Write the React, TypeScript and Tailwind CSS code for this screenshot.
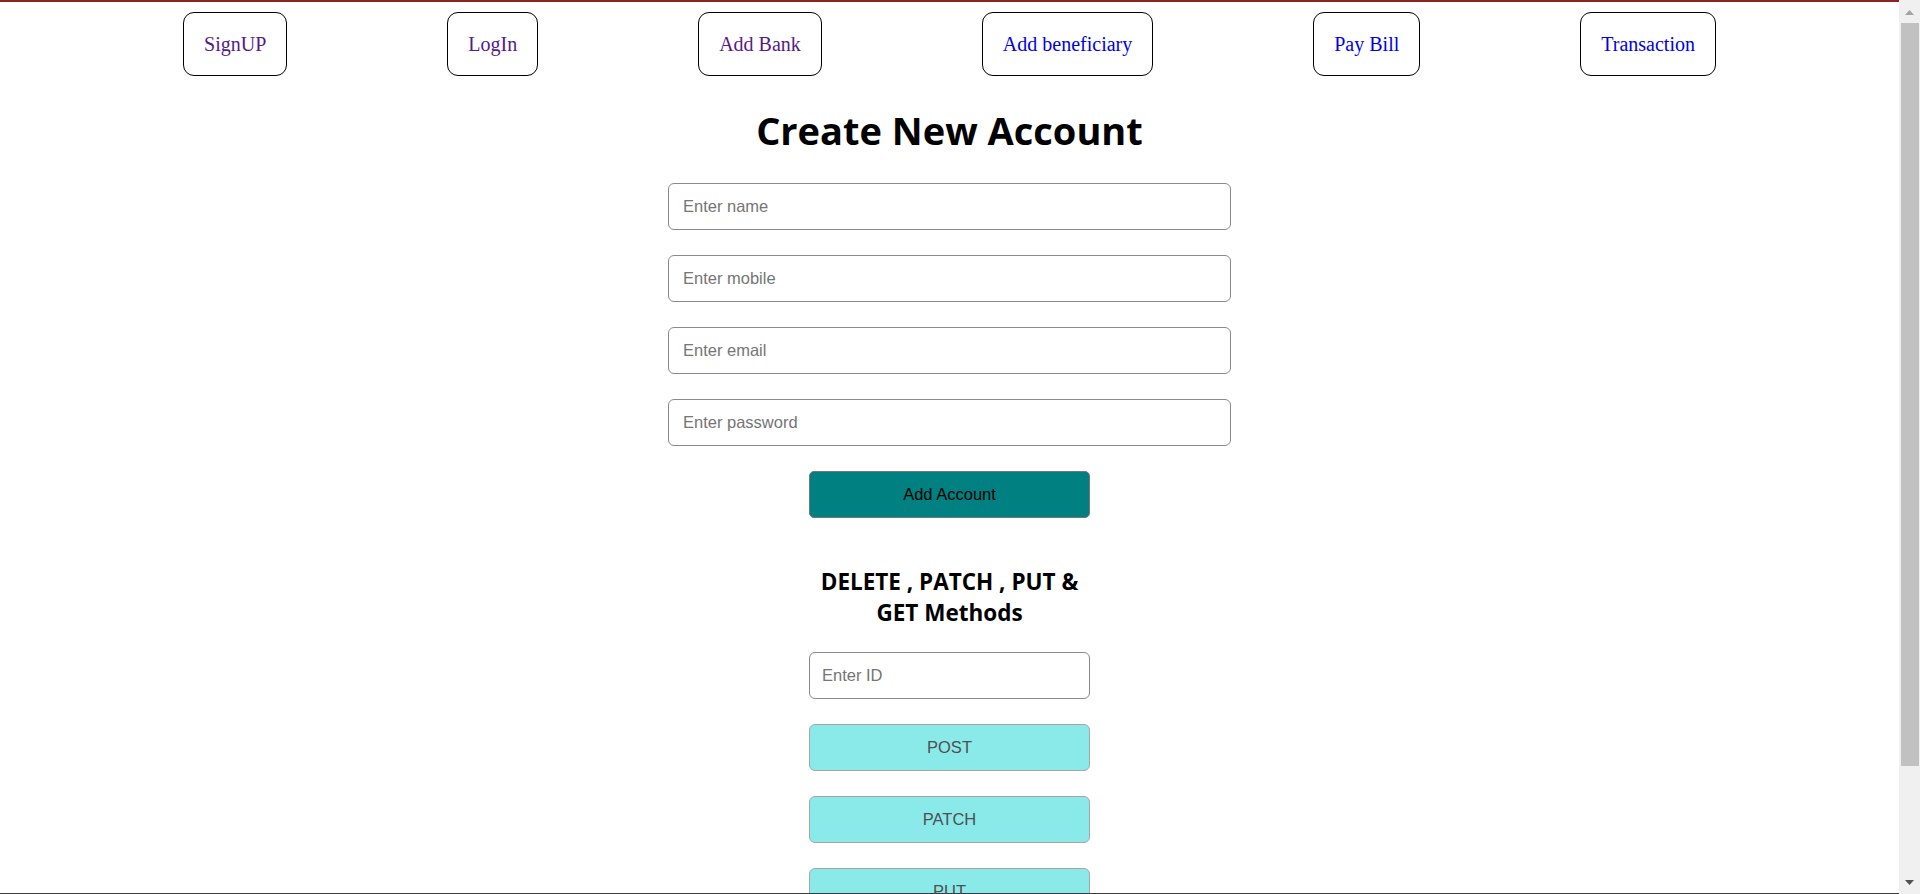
import React from "react";

const navLinks = [
  { label: "SignUP", visited: true },
  { label: "LogIn", visited: true },
  { label: "Add Bank", visited: true },
  { label: "Add beneficiary", visited: false },
  { label: "Pay Bill", visited: false },
  { label: "Transaction", visited: false },
];

const accountFields = ["Enter name", "Enter mobile", "Enter email", "Enter password"];

const methodButtons = ["POST", "PATCH", "PUT"];

function NavBar() {
  return (
    <nav className="flex justify-center gap-[160px] pt-[10px]">
      {navLinks.map((link) => (
        <a
          key={link.label}
          href="#"
          className={
            "flex h-[64px] items-center rounded-[11px] border border-black px-[20px] font-['Liberation_Serif',serif] text-[20px] leading-[23px] " +
            (link.visited ? "text-[#551a8b]" : "text-[#0000ee]")
          }
        >
          {link.label}
        </a>
      ))}
    </nav>
  );
}

function Scrollbar() {
  return (
    <div className="flex h-[894px] w-[21px] shrink-0 flex-col bg-[#f0f0f0]">
      <div className="flex h-[23px] items-center justify-center pt-[2px]">
        <svg width="9" height="5" viewBox="0 0 9 5">
          <path d="M4.5 0 L9 5 L0 5 Z" fill="#a3a3a3" />
        </svg>
      </div>
      <div className="ml-[2px] mr-[1px] h-[743px] bg-[#c1c1c1]" />
      <div className="flex flex-1 items-end justify-center pb-[9px]">
        <svg width="9" height="5" viewBox="0 0 9 5">
          <path d="M0 0 L9 0 L4.5 5 Z" fill="#505050" />
        </svg>
      </div>
    </div>
  );
}

export default function App() {
  return (
    <div className="flex h-[894px] w-full overflow-hidden bg-white">
      <main className="flex h-[894px] min-w-0 flex-1 flex-col overflow-hidden border-t-2 border-b border-t-[#8b2323] border-b-[#3c3c3c]">
        <NavBar />

        <h1 className="mt-[31px] text-center font-['Open_Sans',sans-serif] text-[38px] font-bold leading-[46px] text-black">
          Create New Account
        </h1>

        <form className="mt-[30px] flex flex-col items-center gap-[25px]">
          {accountFields.map((ph) => (
            <input
              key={ph}
              type={ph === "Enter password" ? "password" : "text"}
              placeholder={ph}
              className="h-[47px] w-[563px] rounded-[6px] border border-[#8a8a8a] bg-white px-[14px] font-['Liberation_Sans',Arial,sans-serif] text-[16.5px] text-black outline-none placeholder:text-[#757575]"
            />
          ))}
          <button
            type="button"
            className="h-[47px] w-[281px] rounded-[5px] border border-[#767676] bg-[#008080] font-['Liberation_Sans',Arial,sans-serif] text-[16.5px] text-black"
          >
            Add Account
          </button>
        </form>

        <section className="mx-auto mt-[48px] flex w-[281px] flex-col items-center">
          <h2 className="text-center font-['Open_Sans',sans-serif] text-[22.5px] font-bold leading-[31px] text-black">
            DELETE , PATCH , PUT &amp; GET Methods
          </h2>
          <div className="mt-[24px] flex w-full flex-col gap-[25px]">
            <input
              type="text"
              placeholder="Enter ID"
              className="h-[47px] w-full rounded-[6px] border border-[#8a8a8a] bg-white px-[12px] font-['Liberation_Sans',Arial,sans-serif] text-[16.5px] text-black outline-none placeholder:text-[#757575]"
            />
            {methodButtons.map((m) => (
              <button
                key={m}
                type="button"
                className="h-[47px] w-full shrink-0 rounded-[6px] border border-[#a6a6a6] bg-[#8aeaea] font-['Liberation_Sans',Arial,sans-serif] text-[16.5px] text-[#4f4f4f]"
              >
                {m}
              </button>
            ))}
          </div>
        </section>
      </main>
      <Scrollbar />
    </div>
  );
}
